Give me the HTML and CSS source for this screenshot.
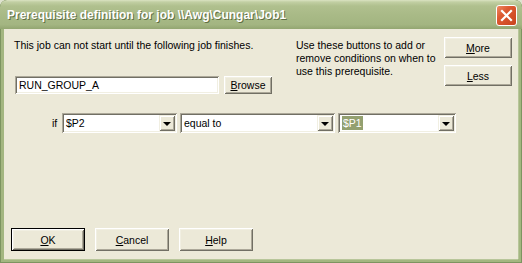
FILE: index.html
```html
<!DOCTYPE html>
<html lang="en">
<head>
    <meta charset="UTF-8">
    <title>Prerequisite definition</title>
    <link rel="stylesheet" href="styles.css">
</head>
<body>
    <div class="window">
        <div class="titlebar">
            <span class="title">Prerequisite definition for job \\Awg\Cungar\Job1</span>
            <span class="close">
                <svg width="21" height="21" viewBox="0 0 21 21">
                    <path d="M6 6 L15 15 M15 6 L6 15" stroke="#fff" stroke-width="2.2" stroke-linecap="square"/>
                </svg>
            </span>
        </div>
        <div class="content">
            <div class="top">
                <div class="left">
                    <p class="lead">This job can not start until the following job finishes.</p>
                    <div class="job-row">
                        <div class="field">RUN_GROUP_A</div>
                        <div class="btn btn-browse"><u>B</u>rowse</div>
                    </div>
                </div>
                <p class="hint">Use these buttons to add or<br>remove conditions on when to<br>use this prerequisite.</p>
                <div class="side-buttons">
                    <div class="btn btn-side"><u>M</u>ore</div>
                    <div class="btn btn-side"><u>L</u>ess</div>
                </div>
            </div>

            <!-- condition row -->
            <div class="cond-row">
                <span class="if">if</span>
                <div class="combo combo-var"><span class="combo-text">$P2</span><span class="drop"></span></div>
                <div class="combo combo-op"><span class="combo-text">equal to</span><span class="drop"></span></div>
                <div class="combo combo-val"><span class="combo-text"><span class="sel">$P1</span></span><span class="drop"></span></div>
            </div>

            <div class="bottom">
                <div class="btn btn-main btn-default"><u>O</u>K</div>
                <div class="btn btn-main"><u>C</u>ancel</div>
                <div class="btn btn-main"><u>H</u>elp</div>
            </div>
        </div>
    </div>
</body>
</html>
```

FILE: styles.css
```css
html, body {
    margin: 0;
    padding: 0;
    background-color: #dfe3cf;
}

.window {
    width: 522px;
    height: 263px;
    box-sizing: border-box;
    display: flex;
    flex-direction: column;
    background-color: #a3b680;
    border-radius: 7px 7px 0 0;
    box-shadow: inset 0 0 0 1px #7d9460;
    padding: 0 4px 4px 4px;
    overflow: hidden;
}

.titlebar {
    height: 29px;
    margin: 0 -4px;
    padding: 0 5px 0 7px;
    display: flex;
    align-items: center;
    justify-content: space-between;
    border-radius: 7px 7px 0 0;
    background: linear-gradient(to bottom, #dbe3c2 0, #c2cfa3 2px, #b0c08e 6px, #a9ba87 50%, #a3b581 85%, #93a671 100%);
}

.title {
    color: #fff;
    font-family: "Liberation Sans", Arial, sans-serif;
    font-weight: bold;
    font-size: 12px;
    text-shadow: 1px 1px 0 #5f6f44;
    margin-top: 1px;
}

.close {
    width: 21px;
    height: 21px;
    box-sizing: border-box;
    border: 1px solid #fff;
    border-radius: 3px;
    background: linear-gradient(135deg, #ee8a63 0, #dd5a32 35%, #c9431d 100%);
    display: flex;
    margin-top: 2px;
}

.close svg {
    margin: -1px;
}

.content {
    flex: 1;
    display: flex;
    flex-direction: column;
    background-color: #ece9d8;
    font-family: "Liberation Sans", Arial, sans-serif;
    font-size: 10.5px;
    color: #000;
    box-shadow: 0 1px 0 #b8c69a, 1px 0 0 #b8c69a;
}

.top {
    display: flex;
    align-items: flex-start;
    padding-top: 8px;
}

.left {
    margin: 2px 0 0 10px;
    width: 264px;
}

.lead {
    margin: 0;
    line-height: 13px;
    white-space: nowrap;
}

.job-row {
    display: flex;
    gap: 5px;
    margin: 24px 0 0 1px;
}

.field {
    width: 204px;
    height: 18px;
    box-sizing: border-box;
    padding: 3px 4px 0;
    background-color: #fff;
    box-shadow: inset 1px 1px #aca899, inset -1px -1px #fff, inset 2px 2px #716f64, inset -2px -2px #f1efe2;
    line-height: 13px;
}

.hint {
    margin: 2px 0 0 18px;
    width: 140px;
    line-height: 13px;
    white-space: nowrap;
}

.side-buttons {
    margin-left: 8px;
    display: flex;
    flex-direction: column;
    gap: 7px;
}

.btn {
    box-sizing: border-box;
    display: flex;
    align-items: center;
    justify-content: center;
    background-color: #ece9d8;
    box-shadow: inset 1px 1px #fff, inset -1px -1px #716f64, inset 2px 2px #f1efe2, inset -2px -2px #aca899;
}

.btn u {
    text-underline-offset: 1px;
}

.btn-browse {
    width: 48px;
    height: 18px;
}

.btn-side {
    width: 68px;
    height: 21px;
}

.cond-row {
    display: flex;
    align-items: center;
    margin: 19px 0 0 48px;
    gap: 3px;
}

.if {
    width: 7px;
}

.combo {
    height: 20px;
    box-sizing: border-box;
    padding: 2px;
    display: flex;
    align-items: center;
    background-color: #fff;
    box-shadow: inset 1px 1px #aca899, inset -1px -1px #fff, inset 2px 2px #716f64, inset -2px -2px #f1efe2;
}

.combo-var { width: 115px; }
.combo-op { width: 155px; }
.combo-val { width: 118px; }

.combo-text {
    flex: 1;
    padding-left: 2px;
    line-height: 13px;
}

.sel {
    background-color: #93a070;
    color: #fff;
    padding: 1px 1px;
}

.drop {
    width: 16px;
    height: 16px;
    box-sizing: border-box;
    display: flex;
    align-items: center;
    justify-content: center;
    background-color: #ece9d8;
    box-shadow: inset 1px 1px #f1efe2, inset -1px -1px #716f64, inset 2px 2px #fff, inset -2px -2px #aca899;
}

.drop::after {
    content: "";
    border-left: 4px solid transparent;
    border-right: 4px solid transparent;
    border-top: 4px solid #000;
    margin-top: 1px;
}

.bottom {
    margin: auto 0 8px 7px;
    display: flex;
    gap: 10px;
}

.btn-main {
    width: 74px;
    height: 23px;
}

.btn-default {
    border: 1px solid #000;
}
```
